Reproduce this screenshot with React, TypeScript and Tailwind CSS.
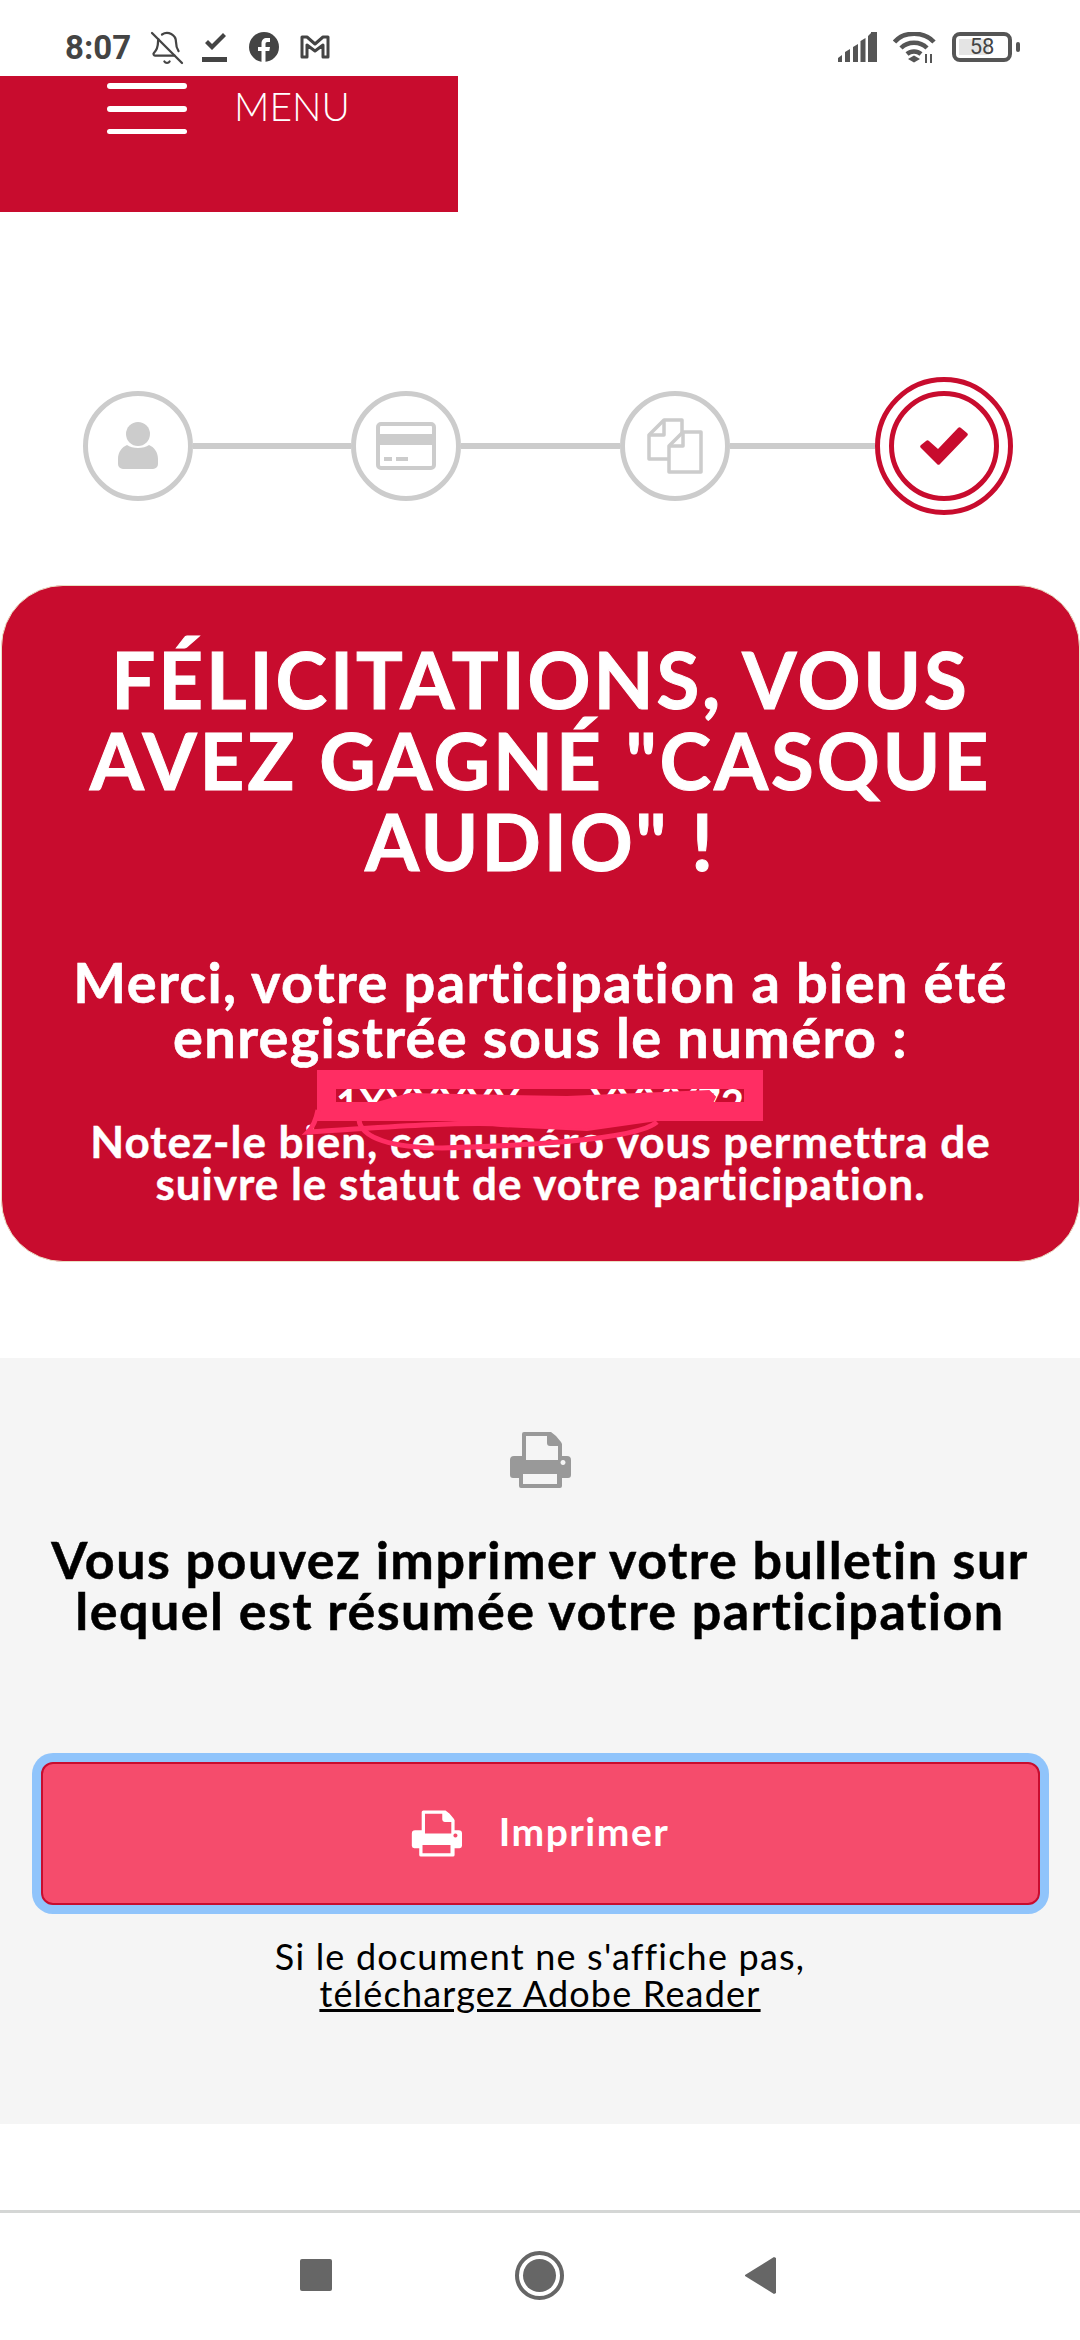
import { BellOff } from "lucide-react";

const Printer = ({ className }: { className: string }) => (
  <svg viewBox="0 0 62 56" className={className} fill="currentColor">
    <path fillRule="evenodd" d="M13 2a2 2 0 0 1 2-2h27l5 4 5 6 1 2v12h5a4 4 0 0 1 4 4v15a3 3 0 0 1-3 3h-6v8a2 2 0 0 1-2 2H12a2 2 0 0 1-2-2v-8H4a3 3 0 0 1-3-3V28a4 4 0 0 1 4-4h5h3V2zM17 4v24h32V14H41a3 3 0 0 1-3-3V4zM14 42v10h34V42zM54 28a2.500 2.500 0 1 0 .01 0z" />
  </svg>
);

const Step = ({ children }: { children: React.ReactNode }) => (
  <div className="w-[110px] h-[110px] rounded-full border-[5px] border-[#cccccc] flex items-center justify-center shrink-0">
    {children}
  </div>
);

const Line = ({ w }: { w: string }) => <div className={`h-[6px] bg-[#cccccc] ${w}`} />;

export default function App() {
  return (
    <div className="w-[1080px] h-[2340px] bg-white flex flex-col overflow-hidden font-['Lato','Liberation_Sans',sans-serif] text-black">
      {/* status bar */}
      <div className="h-[76px] shrink-0 flex items-start pt-[32px] pl-[65px] pr-[60px] text-[#444444]">
        <span className="text-[33px] leading-[32px] font-bold font-['Roboto',sans-serif] w-[86px]">8:07</span>
        <BellOff className="w-[36px] h-[36px] -mt-[2px] -ml-[2px]" strokeWidth={1.5} />
        <svg viewBox="0 0 25 30" className="w-[25px] h-[30px] ml-[17px]" fill="#444444">
          <path d="M3 11l3-3 4 4L21 1l3 3L10 18zM0 25h25v5H0z" />
        </svg>
        <svg viewBox="0 0 30 30" className="w-[30px] h-[30px] ml-[22px]">
          <circle cx="15" cy="15" r="15" fill="#444444" />
          <path d="M12.500 30V19H9v-4h3.500v-3.500C12.500 8 14.500 6 18 6h3v4h-2.500c-1.500 0-2 .8-2 2v3H21l-.7 4h-3.800v11z" fill="#fff" />
        </svg>
        <svg viewBox="0 0 30 24" className="w-[30px] h-[24px] ml-[21px] mt-[3px]" fill="none" stroke="#444444" strokeWidth="3" strokeLinejoin="round">
          <path d="M2 2h5l8 7 8-7h5v20h-5V10l-8 6-8-6v12H2z" />
        </svg>
        <div className="ml-auto flex items-start">
          <svg viewBox="0 0 40 30" className="w-[40px] h-[30px]" fill="#555555">
            <path d="M0 26l4-3v7H0zM7 20l5-3v13H7zM15 15l5-3v18h-5zM22.500 9l5-3v24h-5zM33 0h6v30h-6zM30 4l3-3v29h-3z" />
          </svg>
          <svg viewBox="0 0 44 32" className="w-[44px] h-[32px] ml-[15px]" fill="none" stroke="#555555" strokeWidth="4.500">
            <path d="M1.500 10C11-1 31-1 41 10M8 16c7-7 19-7 26 0M14 22c4-3.500 10-3.500 14 0" />
            <path d="M15 27l6-3.500 6 3.500-6 3.500z" fill="#555555" stroke="none" />
            <path d="M33 22v9M38 22v9" strokeWidth="2" />
          </svg>
          <div className="relative w-[60px] h-[30px] ml-[15px] rounded-[8px] border-[4px] border-[#555555] flex items-center justify-center overflow-hidden">
            <div className="absolute left-[3px] top-[3px] bottom-[3px] w-[30px] bg-[#e4e4e4]" />
            <span className="relative text-[22px] leading-none font-['Roboto',sans-serif] text-[#444444]">58</span>
          </div>
          <div className="w-[4px] h-[10px] mt-[10px] ml-[4px] bg-[#555555] rounded-[2px]" />
        </div>
      </div>

      {/* menu */}
      <div className="h-[136px] w-[458px] shrink-0 bg-[#c80c2e] flex items-start pl-[107px] pt-[7px]">
        <div className="w-[80px] flex flex-col gap-[17px]">
          <div className="h-[6px] rounded-full bg-white" />
          <div className="h-[6px] rounded-full bg-white" />
          <div className="h-[5px] rounded-full bg-white" />
        </div>
        <span className="ml-[47px] text-[39px] leading-[48px] font-light text-white -mt-[1px]">MENU</span>
      </div>

      {/* stepper */}
      <div className="h-[373px] shrink-0 pt-[165px] pl-[83px] flex items-start">
        <div className="flex items-center">
          <Step>
            <svg viewBox="0 0 40 48" className="w-[40px] h-[48px]" fill="#cccccc">
              <circle cx="20" cy="12" r="12" />
              <path d="M9 23c5 4 17 4 22 0 5 2 9 7 9 14v5a5 5 0 0 1-5 5H5a5 5 0 0 1-5-5v-5c0-7 4-12 9-14z" />
            </svg>
          </Step>
          <Line w="w-[158px]" />
          <Step>
            <svg viewBox="0 0 60 48" className="w-[60px] h-[48px]">
              <rect x="2" y="2" width="56" height="44" rx="3" fill="none" stroke="#cccccc" strokeWidth="4" />
              <rect x="2" y="12" width="56" height="11" fill="#cccccc" />
              <rect x="8" y="35" width="8" height="4" fill="#cccccc" />
              <rect x="20" y="35" width="12" height="4" fill="#cccccc" />
            </svg>
          </Step>
          <Line w="w-[159px]" />
          <Step>
            <svg viewBox="0 0 56 56" className="w-[56px] h-[56px]" fill="none" stroke="#cccccc" strokeWidth="3.500" strokeLinejoin="round">
              <path d="M35 17V2H17L2 17v24h20" />
              <path d="M17 2v15H2" />
              <path d="M54 14H36L22 28v26h32z" fill="#fff" />
              <path d="M36 14v14H22" />
            </svg>
          </Step>
          <Line w="w-[145px]" />
          <div className="w-[138px] h-[138px] rounded-full border-[5px] border-[#c80c2e] flex items-center justify-center shrink-0">
            <div className="w-[110px] h-[110px] rounded-full border-[5px] border-[#c80c2e] flex items-center justify-center">
              <svg viewBox="0 0 48 38" className="w-[48px] h-[38px]" fill="#c80c2e">
                <path d="M1 21a2 2 0 0 1 0-3l5-4a2 2 0 0 1 3 0l9 8L38 1a2 2 0 0 1 3 0l6 5a2 2 0 0 1 0 3L20 37a2 2 0 0 1-3 0z" />
              </svg>
            </div>
          </div>
        </div>
      </div>

      {/* red card */}
      <div className="relative h-[677px] ml-[1px] shrink-0 rounded-[62px] bg-[#c80c2e] border border-[#eadfc4] text-white text-center pt-[53px]">
        <h1 className="text-[78px] leading-[81px] font-bold tracking-[2.900px] [-webkit-text-stroke:1px_white]">
          FÉLICITATIONS, VOUS
          <br />
          AVEZ GAGNÉ "CASQUE
          <br />
          AUDIO" !
        </h1>
        <p className="mt-[72px] text-[56px] leading-[55px] font-bold tracking-[1.300px] [-webkit-text-stroke:0.6px_white]">
          Merci, votre participation a bien été
          <br />
          enregistrée sous le numéro :
        </p>
        <div className="h-[56px]" />
        <p className="text-[44px] leading-[42px] font-bold tracking-[1px] [-webkit-text-stroke:0.4px_white]">
          Notez-le bien, ce numéro vous permettra de
          <br />
          suivre le statut de votre participation.
        </p>
        {/* redaction overlay */}
        <div className="absolute left-[315px] top-[484px] w-[446px] h-[51px] bg-[#ff2d63]">
          <div className="absolute left-[19px] top-[19px] w-[408px] h-[13px] bg-[#c80c2e] overflow-hidden">
            <div className="absolute left-0 right-0 -top-[6px] flex justify-between text-[40px] leading-[40px] font-bold text-white">
              <span>1XXXXXX</span>
              <span>XXXX72</span>
            </div>
          </div>
          <svg viewBox="0 0 446 82" className="absolute left-0 top-0 w-[446px] h-[82px] overflow-visible" fill="none" stroke="#ff2d63">
            <path d="M60 33 92 24 250 27 392 21 398 27 395 33z" fill="#ff2d63" strokeWidth="2" />
            <path d="M134 50 184 56 270 60 340 50z" fill="#ff2d63" strokeWidth="2" />
            <path d="M1 40Q-2 55-9 62C60 58 120 52 190 54" strokeWidth="5" />
            <path d="M42 50C44 68 75 78 125 78 200 76 320 70 340 52" strokeWidth="5" />
          </svg>
        </div>
      </div>

      {/* print section */}
      <div className="mt-[96px] h-[766px] shrink-0 bg-[#f5f5f5] flex flex-col items-center">
        <Printer className="mt-[74px] w-[62px] h-[56px] text-[#999999]" />
        <h2 className="mt-[46px] text-[52px] leading-[51px] font-bold text-center tracking-[1.500px] [-webkit-text-stroke:0.5px_black]">
          Vous pouvez imprimer votre bulletin sur
          <br />
          lequel est résumée votre participation
        </h2>
        <button className="mt-[126px] w-[999px] h-[143px] rounded-[12px] bg-[#f54c6c] border-[2px] border-[#c80c2e] ring-[9px] ring-[#90c4fb] flex items-center justify-center text-white">
          <Printer className="w-[51px] h-[47px]" />
          <span className="ml-[37px] -mt-[5px] text-[39px] leading-none font-bold tracking-[1.500px]">Imprimer</span>
        </button>
        <p className="mt-[33px] text-[36px] leading-[37px] text-center tracking-[1.200px]">
          Si le document ne s'affiche pas,
          <br />
          <span className="underline">téléchargez Adobe Reader</span>
        </p>
      </div>

      {/* nav bar */}
      <div className="mt-[86px] h-[130px] shrink-0 border-t-[3px] border-[#d4d6d5] flex items-start text-[#666666]">
        <div className="ml-[300px] mt-[46px] w-[32px] h-[32px] bg-[#666666] rounded-[2px]" />
        <div className="ml-[183px] mt-[38px] w-[49px] h-[49px] rounded-full border-[4px] border-[#666666] flex items-center justify-center">
          <div className="w-[33px] h-[33px] rounded-full bg-[#666666]" />
        </div>
        <svg viewBox="0 0 31 37" className="ml-[181px] mt-[44px] w-[31px] h-[37px]" fill="#666666">
          <path d="M31 1v35L29 37 0 19v-1L29 0z" />
        </svg>
      </div>
    </div>
  );
}
